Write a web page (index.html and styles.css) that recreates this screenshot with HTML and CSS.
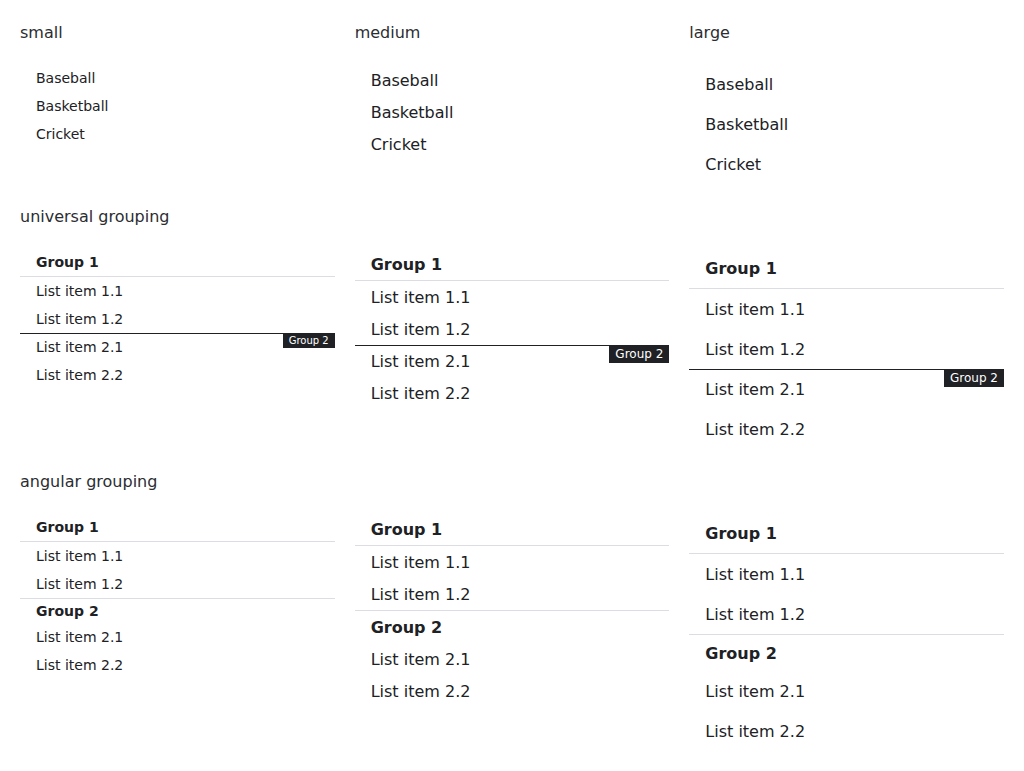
FILE: index.html
```html
<!DOCTYPE html>
<html>
<head>
<meta charset="utf-8">
<link rel="stylesheet" href="styles.css">
</head>
<body>
<div class="page">
  <section class="row3">
    <div class="col">
      <h2 class="title">small</h2>
      <ul class="list sm">
        <li class="item">Baseball</li>
        <li class="item">Basketball</li>
        <li class="item">Cricket</li>
      </ul>
    </div>
    <div class="col">
      <h2 class="title">medium</h2>
      <ul class="list md">
        <li class="item">Baseball</li>
        <li class="item">Basketball</li>
        <li class="item">Cricket</li>
      </ul>
    </div>
    <div class="col">
      <h2 class="title">large</h2>
      <ul class="list lg">
        <li class="item">Baseball</li>
        <li class="item">Basketball</li>
        <li class="item">Cricket</li>
      </ul>
    </div>
  </section>

  <section class="block">
    <h2 class="title">universal grouping</h2>
    <div class="row3">
      <div class="list sm">
        <div class="group">
          <div class="header">Group 1</div>
          <div class="item">List item 1.1</div>
          <div class="item">List item 1.2</div>
        </div>
        <div class="group sticky">
          <span class="badge">Group 2</span>
          <div class="item">List item 2.1</div>
          <div class="item">List item 2.2</div>
        </div>
      </div>
      <div class="list md">
        <div class="group">
          <div class="header">Group 1</div>
          <div class="item">List item 1.1</div>
          <div class="item">List item 1.2</div>
        </div>
        <div class="group sticky">
          <span class="badge">Group 2</span>
          <div class="item">List item 2.1</div>
          <div class="item">List item 2.2</div>
        </div>
      </div>
      <div class="list lg">
        <div class="group">
          <div class="header">Group 1</div>
          <div class="item">List item 1.1</div>
          <div class="item">List item 1.2</div>
        </div>
        <div class="group sticky">
          <span class="badge">Group 2</span>
          <div class="item">List item 2.1</div>
          <div class="item">List item 2.2</div>
        </div>
      </div>
    </div>
  </section>

  <section class="block">
    <h2 class="title">angular grouping</h2>
    <div class="row3">
      <div class="list sm">
        <div class="group">
          <div class="header">Group 1</div>
          <div class="item">List item 1.1</div>
          <div class="item">List item 1.2</div>
        </div>
        <div class="group next">
          <div class="header">Group 2</div>
          <div class="item">List item 2.1</div>
          <div class="item">List item 2.2</div>
        </div>
      </div>
      <div class="list md">
        <div class="group">
          <div class="header">Group 1</div>
          <div class="item">List item 1.1</div>
          <div class="item">List item 1.2</div>
        </div>
        <div class="group next">
          <div class="header">Group 2</div>
          <div class="item">List item 2.1</div>
          <div class="item">List item 2.2</div>
        </div>
      </div>
      <div class="list lg">
        <div class="group">
          <div class="header">Group 1</div>
          <div class="item">List item 1.1</div>
          <div class="item">List item 1.2</div>
        </div>
        <div class="group next">
          <div class="header">Group 2</div>
          <div class="item">List item 2.1</div>
          <div class="item">List item 2.2</div>
        </div>
      </div>
    </div>
  </section>
</div>
</body>
</html>
```

FILE: styles.css
```css
* { box-sizing: border-box; }
html, body { margin: 0; padding: 0; background: #fff; }
body {
  font-family: "DejaVu Sans", sans-serif;
  color: #202124;
}
.page {
  padding: 20px;
  display: flex;
  flex-direction: column;
  gap: 20px;
}
.block {
  display: flex;
  flex-direction: column;
  gap: 20px;
}
.row3 {
  display: grid;
  grid-template-columns: repeat(3, 1fr);
  column-gap: 20px;
  align-items: start;
}
.col {
  display: flex;
  flex-direction: column;
  gap: 20px;
}
.title {
  margin: 0;
  font-size: 16px;
  font-weight: normal;
  height: 24px;
  line-height: 26px;
  color: #2b2d31;
}
.list {
  margin: 0;
  padding: 0;
  list-style: none;
}
.item, .header {
  padding: 0 16px;
  white-space: nowrap;
}
.header {
  font-weight: bold;
  border-bottom: 1px solid #dcdde2;
}
.group { position: relative; }
.group.next { border-top: 1px solid #dcdde2; }
.group.sticky::before {
  content: "";
  position: absolute;
  left: 0;
  right: 0;
  top: 0;
  height: 1px;
  background: #202124;
}
.badge {
  position: absolute;
  top: 0;
  right: 0;
  background: #202124;
  color: #fff;
  padding: 0 6px;
}

.sm { font-size: 14px; }
.sm .item { height: 28px; line-height: 28px; }
.sm .header { height: 29px; line-height: 28px; }
.sm .next .header { height: 24px; line-height: 24px; border-bottom: none; }
.sm .badge { font-size: 10px; height: 15px; line-height: 15px; }

.md { font-size: 16px; }
.md .item { height: 32px; line-height: 34px; }
.md .header { height: 33px; line-height: 34px; }
.md .next .header { height: 32px; line-height: 34px; border-bottom: none; }
.md .badge { font-size: 12px; height: 18px; line-height: 18px; }

.lg { font-size: 16px; }
.lg .item { height: 40px; line-height: 42px; }
.lg .header { height: 41px; line-height: 42px; }
.lg .next .header { height: 36px; line-height: 38px; border-bottom: none; }
.lg .badge { font-size: 12px; height: 18px; line-height: 18px; }
```
